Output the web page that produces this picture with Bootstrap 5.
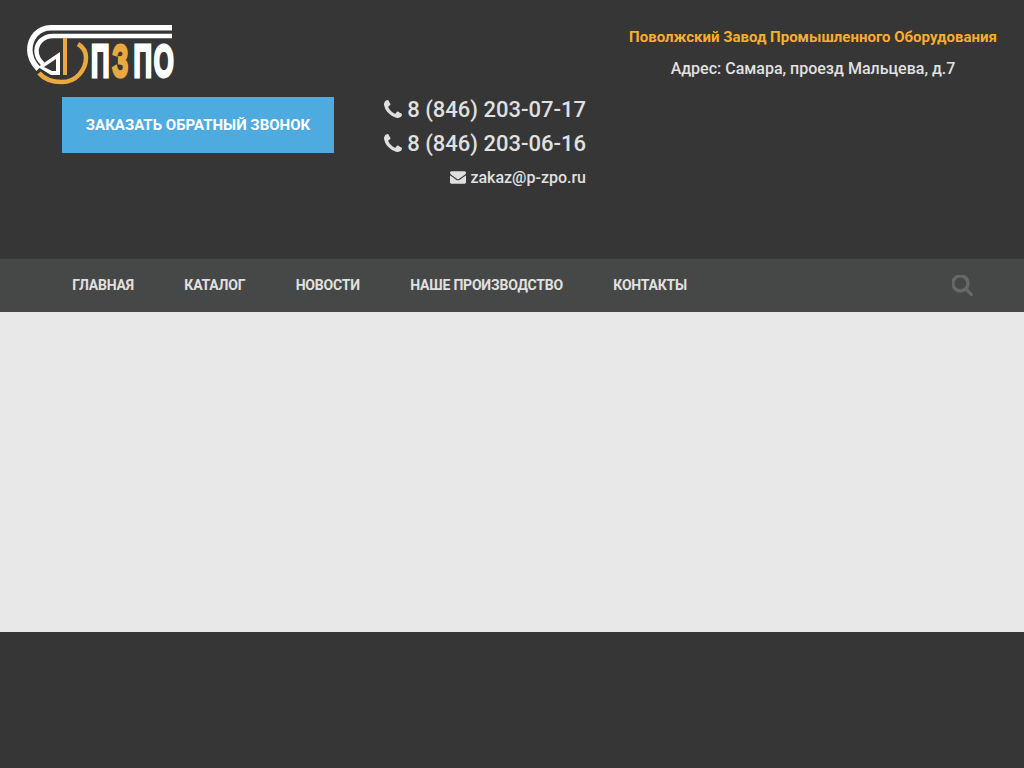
<!DOCTYPE html>
<html lang="ru">
<head>
    <meta charset="UTF-8">
    <meta name="viewport" content="width=device-width, initial-scale=1.0">
    <title>ПЗПО</title>
    <link rel="stylesheet" href="https://cdn.jsdelivr.net/npm/bootstrap@5.3.0/dist/css/bootstrap.min.css">
    <style>
        body { background: #363636; font-family: Roboto, "Liberation Sans", sans-serif; color: #e0e0e0; }
        .site-head { height: 259px; background: #363636; padding: 25px 27px 0 27px; }
        .logo-box { display: block; width: 146px; height: 60px; overflow: visible; }
        .logo-word { font-family: "Liberation Sans", sans-serif; font-weight: 700; font-size: 46px; }
        .call-btn { width: 272px; height: 56px; margin: 12px 0 0 35px; background: #4dabe0; color: #fff; font-size: 15px; font-weight: 700; border: 0; border-radius: 0; padding: 0; }
        .call-btn:hover { background: #4dabe0; color: #fff; }
        .phones { width: 252px; margin-top: 68px; text-align: right; }
        .phone-line { font-size: 22px; font-weight: 500; line-height: 34px; color: #e0e0e0; white-space: nowrap; }
        .mail-line { font-size: 16px; font-weight: 500; line-height: 34px; color: #e0e0e0; }
        .head-right { width: 368px; margin-left: auto; text-align: center; }
        .plant-name { color: #fbae2c; font-size: 15px; font-weight: 700; line-height: 24px; white-space: nowrap; }
        .plant-addr { font-size: 16px; font-weight: 500; line-height: 24px; margin-top: 8px; white-space: nowrap; }
        .main-bar { height: 53px; background: #464847; padding: 0 51px 0 47px; }
        .main-bar a { color: #e0e0e0; font-size: 14px; font-weight: 700; text-decoration: none; letter-spacing: -.2px; padding: 0 25.2px; white-space: nowrap; }
        .page-body { height: 320px; background: #e8e8e8; }
        .page-foot { height: 136px; background: #363636; }
        .ico-phone { width: 18px; height: 18px; fill: currentColor; vertical-align: -1px; }
        .ico-mail { width: 16px; height: 13px; fill: currentColor; vertical-align: -1px; }
        .ico-search { width: 21px; height: 21px; fill: #666867; }
    </style>
</head>
<body>
<header class="site-head d-flex">
    <div>
        <svg class="logo-box" viewBox="0 0 146 60" role="img" aria-label="ПЗПО">
            <g fill="none" stroke="#fff">
                <path stroke-width="5.500" d="M145 2.800H24C11 2.800 2.800 13 2.800 25c0 7 3 13 8.700 19"/>
                <path stroke-width="4.500" d="M145 11H26C16 11 9.500 18 9.500 26c0 5 2 9 6.500 13"/>
            </g>
            <path fill="#fff" fill-rule="evenodd" d="M11 42 33 27v23H24zM17 42l8 4h4V34z"/>
            <rect x="36" y="13" width="4" height="37" fill="#e9a93f"/>
            <path d="M51 19c5 3 8 7.500 8 13.500C59 45 49 57 35 57c-10 0-18-3-23-9" fill="none" stroke="#e9a93f" stroke-width="4.500"/>
            <g transform="translate(64 52) scale(.56 1)">
                <text class="logo-word" stroke-width="3"><tspan x="0" fill="#fff" stroke="#fff">П</tspan><tspan x="38" fill="#e9a93f" stroke="#e9a93f">З</tspan><tspan x="76" fill="#fff" stroke="#fff">П</tspan><tspan x="112" fill="#fff" stroke="#fff">О</tspan></text>
            </g>
        </svg>
        <button type="button" class="btn call-btn text-uppercase">Заказать обратный звонок</button>
    </div>
    <div class="phones">
        <div class="phone-line">
            <svg class="ico-phone" viewBox="0 128 1408 1408"><path d="M1408 1240q0 27-10 70.5t-21 68.500q-21 50-122 106-94 51-186 51-27 0-53-3.500t-57.500-12.500-47-14.500-55.500-20.500-49-18q-98-35-175-83-127-79-264-216t-216-264q-48-77-83-175-3-9-18-49t-20.500-55.500-14.500-47-12.500-57.500-3.500-53q0-92 51-186 56-101 106-122 25-11 68.500-21t70.500-10q14 0 21 3 18 6 53 76 11 19 30 54t35 63.500 31 53.500q3 4 17.500 25t21.500 35.500 7 28.500q0 20-28.500 50t-62 55-62 53-28.500 46q0 9 5 22.500t8.500 20.500 14 24 11.500 19q76 137 174 235t235 174q2 1 19 11.500t24 14 20.500 8.500 22.500 5q18 0 46-28.500t53-62 55-62 50-28.500q14 0 28.500 7t35.500 21.500 25 17.500q25 15 53.500 31t63.500 35 54 30q70 35 76 53 3 7 3 21z"/></svg>
            8 (846) 203-07-17
        </div>
        <div class="phone-line">
            <svg class="ico-phone" viewBox="0 128 1408 1408"><path d="M1408 1240q0 27-10 70.5t-21 68.500q-21 50-122 106-94 51-186 51-27 0-53-3.500t-57.500-12.500-47-14.500-55.500-20.500-49-18q-98-35-175-83-127-79-264-216t-216-264q-48-77-83-175-3-9-18-49t-20.500-55.500-14.500-47-12.500-57.500-3.500-53q0-92 51-186 56-101 106-122 25-11 68.500-21t70.500-10q14 0 21 3 18 6 53 76 11 19 30 54t35 63.500 31 53.500q3 4 17.500 25t21.500 35.500 7 28.500q0 20-28.500 50t-62 55-62 53-28.500 46q0 9 5 22.500t8.500 20.500 14 24 11.500 19q76 137 174 235t235 174q2 1 19 11.500t24 14 20.500 8.500 22.500 5q18 0 46-28.500t53-62 55-62 50-28.500q14 0 28.500 7t35.500 21.500 25 17.500q25 15 53.500 31t63.500 35 54 30q70 35 76 53 3 7 3 21z"/></svg>
            8 (846) 203-06-16
        </div>
        <div class="mail-line">
            <svg class="ico-mail" viewBox="0 256 1792 1408"><path d="M1792 710v794q0 66-47 113t-113 47h-1472q-66 0-113-47t-47-113v-794q44 49 101 87 362 246 497 345 57 42 92.500 65.500t94.500 48 110 24.500h2q51 0 110-24.500t94.500-48 92.500-65.500q170-123 498-345 57-39 100-87zm0-294q0 79-49 151t-122 123q-376 261-468 325-10 7-42.500 30.500t-54 38-52 32.500-57.500 27-50 9h-2q-23 0-50-9t-57.500-27-52-32.500-54-38-42.500-30.500q-91-64-262-182.500t-205-142.500q-62-42-117-115.500t-55-136.500q0-78 41.500-130t118.500-52h1472q65 0 112.500 47t47.500 113z"/></svg>
            zakaz@p-zpo.ru
        </div>
    </div>
    <div class="head-right">
        <div class="plant-name">Поволжский Завод Промышленного Оборудования</div>
        <div class="plant-addr">Адрес: Самара, проезд Мальцева, д.7</div>
    </div>
</header>
<nav class="main-bar d-flex align-items-center">
    <a href="#" class="text-uppercase">Главная</a>
    <a href="#" class="text-uppercase">Каталог</a>
    <a href="#" class="text-uppercase">Новости</a>
    <a href="#" class="text-uppercase">Наше производство</a>
    <a href="#" class="text-uppercase">Контакты</a>
    <svg class="ms-auto ico-search" viewBox="128 192 1600 1600"><path d="M1216 832q0-185-131.500-316.500t-316.500-131.500-316.500 131.500-131.500 316.500 131.500 316.500 316.500 131.500 316.500-131.500 131.500-316.500zm512 832q0 52-38 90t-90 38q-54 0-90-38l-343-342q-179 124-399 124-143 0-273.500-55.500t-225-150-150-225-55.500-273.500 55.500-273.500 150-225 225-150 273.500-55.500 273.500 55.500 225 150 150 225 55.500 273.500q0 220-124 399l343 343q37 37 37 90z"/></svg>
</nav>
<main class="page-body"></main>
<footer class="page-foot"></footer>
<script src="https://cdn.jsdelivr.net/npm/bootstrap@5.3.0/dist/js/bootstrap.bundle.min.js"></script>
</body>
</html>
